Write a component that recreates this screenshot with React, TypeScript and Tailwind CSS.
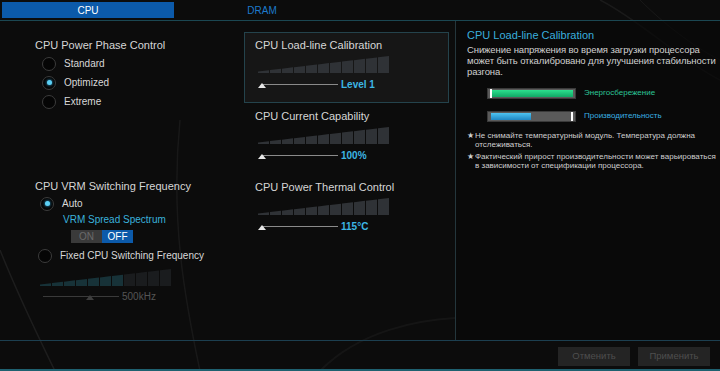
import React from 'react';

const FONT = { fontFamily: '"Liberation Sans", Arial, sans-serif' };

function Radio({ label, checked }: { label: string; checked?: boolean }) {
  return (
    <div className="flex items-center h-[19px] gap-[8px]">
      <span className="w-[14px] h-[14px] rounded-full border border-[#3c3c3c] bg-[#050505] flex items-center justify-center">
        {checked && <span className="w-[5px] h-[5px] rounded-full bg-[#5cd0f5] shadow-[0_0_3px_#3ab8f0]" />}
      </span>
      <span className="text-[10px] text-[#d8d8d8]">{label}</span>
    </div>
  );
}

function Ramp({ active = 11, dim }: { active?: number; dim?: boolean }) {
  const w = 131;
  const h = 17;
  const bw = 11;
  const bars = Array.from({ length: 11 }, (_, i) => {
    const x0 = i * (bw + 1);
    const x1 = x0 + bw;
    const y0 = h - (1.5 + (15.5 * x0) / w);
    const y1 = h - (1.5 + (15.5 * x1) / w);
    let fill = '#2f3236';
    if (dim) fill = i < active ? '#173238' : '#1a1c1e';
    return <polygon key={i} points={`${x0},${h} ${x0},${y0} ${x1},${y1} ${x1},${h}`} fill={fill} />;
  });
  return (
    <svg width={w} height={h} viewBox={`0 0 ${w} ${h}`}>
      {bars}
    </svg>
  );
}

function SliderRow({ value, dim, thumbAt = 0 }: { value: string; dim?: boolean; thumbAt?: number }) {
  return (
    <div className="flex items-center h-[12px]">
      <svg width="80" height="12" viewBox="0 0 80 12">
        <line x1="4" y1="6.5" x2="80" y2="6.5" stroke={dim ? '#3a3a3a' : '#8a8a8a'} strokeWidth="1" />
        <polygon
          points={`${thumbAt},10 ${thumbAt + 4},5 ${thumbAt + 8},10`}
          fill={dim ? '#3d3d3d' : '#e6e6e6'}
        />
      </svg>
      <span className={`ml-[3px] text-[10px] ${dim ? 'text-[#555]' : 'text-[#3db6e4] font-bold'}`}>{value}</span>
    </div>
  );
}

function Setting({ title, value, boxed }: { title: string; value: string; boxed?: boolean }) {
  return (
    <div
      className={`h-[71px] pl-[10px] pt-[5px] ${
        boxed ? 'border border-[#24434c] bg-[#161616]' : 'border border-transparent'
      }`}
    >
      <div className="text-[11px] leading-[14px] text-[#d6d6d6]">{title}</div>
      <div className="mt-[4px] ml-[3px]">
        <Ramp />
      </div>
      <div className="mt-[5px] ml-[3px]">
        <SliderRow value={value} />
      </div>
    </div>
  );
}

function Meter({ fill, color, marker }: { fill: number; color: string; marker: 'left' | 'right' }) {
  return (
    <div className="relative w-[89px] h-[11px] bg-[#5a5a5a] border border-[#3a3a3a]">
      <div className="absolute top-[1px] bottom-[1px] left-[3px]" style={{ width: fill, background: color }} />
      <div
        className={`absolute top-0 bottom-0 w-[2px] bg-white ${marker === 'left' ? 'left-[2px]' : 'right-[2px]'}`}
      />
    </div>
  );
}

export default function App() {
  return (
    <div className="relative w-[720px] h-[371px] overflow-hidden bg-[#0c0c0c]" style={FONT}>
      {/* faint background streaks */}
      <svg className="absolute inset-0 pointer-events-none" width="720" height="371" viewBox="0 0 720 371">
        <path d="M0 250 C 20 300, 40 340, 55 371" stroke="#ffffff" strokeOpacity="0.07" fill="none" strokeWidth="1.5" />
        <path d="M180 120 C 170 220, 185 300, 200 371" stroke="#ffffff" strokeOpacity="0.05" fill="none" strokeWidth="1.5" />
        <path d="M320 371 C 360 330, 420 320, 455 318" stroke="#ffffff" strokeOpacity="0.04" fill="none" strokeWidth="2" />
        <path d="M600 0 C 640 20, 680 60, 720 80" stroke="#ffffff" strokeOpacity="0.06" fill="none" strokeWidth="1.5" />
        <path d="M640 0 C 670 30, 700 50, 720 60" stroke="#ffffff" strokeOpacity="0.05" fill="none" strokeWidth="1" />
      </svg>

      {/* tabs */}
      <div className="relative flex h-[21px] pt-[2px] pl-[2px] border-b border-[#1b4752]">
        <div className="w-[172px] h-[16px] bg-[#0c5aaa] flex items-center justify-center text-[10px] text-white">
          CPU
        </div>
        <div className="w-[176px] h-[16px] flex items-center justify-center text-[10px] text-[#1d7acb]">DRAM</div>
      </div>

      {/* body */}
      <div className="relative flex h-[319px]">
        <div className="w-[240px] pl-[35px] pt-[17px]">
          <div className="text-[11px] leading-[14px] text-[#d6d6d6]">CPU Power Phase Control</div>
          <div className="mt-[2px] ml-[7px]">
            <Radio label="Standard" />
            <Radio label="Optimized" checked />
            <Radio label="Extreme" />
          </div>

          <div className="mt-[68px] text-[11px] leading-[14px] text-[#d6d6d6]">CPU VRM Switching Frequency</div>
          <div className="mt-[1px] ml-[5px]">
            <Radio label="Auto" checked />
          </div>
          <div className="ml-[28px] text-[10px] leading-[13px] text-[#3ab2dc]">VRM Spread Spectrum</div>
          <div className="mt-[4px] ml-[36px] flex h-[13px] text-[10px]">
            <div className="w-[31px] bg-[#3a3a3a] text-[#6a6a6a] flex items-center justify-center">ON</div>
            <div className="w-[31px] bg-[#0c5aaa] text-white flex items-center justify-center">OFF</div>
          </div>
          <div className="mt-[3px] ml-[3px]">
            <Radio label="Fixed CPU Switching Frequency" />
          </div>
          <div className="mt-[4px] ml-[5px]">
            <Ramp dim active={7} />
          </div>
          <div className="mt-[4px] ml-[4px]">
            <SliderRow value="500kHz" dim thumbAt={47} />
          </div>
        </div>

        <div className="w-[215px] pl-[4px] pt-[11px] pr-[6px]">
          <Setting title="CPU Load-line Calibration" value="Level 1" boxed />
          <Setting title="CPU Current Capability" value="100%" />
          <Setting title="CPU Power Thermal Control" value="115°C" />
        </div>

        <div className="flex-1 border-l border-[#24363c] bg-[#080808]/70 pl-[11px] pt-[7px] pr-[4px]">
          <div className="text-[11px] leading-[14px] text-[#3aaedd]">CPU Load-line Calibration</div>
          <div className="mt-[2px] text-[9.5px] leading-[11px] text-[#d0d0d0] whitespace-nowrap tracking-[-0.1px]">
            Снижение напряжения во время загрузки процессора
            <br />
            может быть откалибровано для улучшения стабильности
            <br />
            разгона.
          </div>
          <div className="mt-[10px] ml-[20px] flex items-center gap-[8px]">
            <Meter fill={82} color="linear-gradient(#2de08e,#10a866)" marker="left" />
            <span className="text-[8px] text-[#2cc596]">Энергосбережение</span>
          </div>
          <div className="mt-[11px] ml-[20px] flex items-center gap-[8px]">
            <Meter fill={40} color="linear-gradient(#4ec3f0,#1f86c2)" marker="right" />
            <span className="text-[8px] text-[#3ab0e2]">Производительность</span>
          </div>
          <div className="mt-[9px] text-[8px] leading-[9px] text-[#cfcfcf] whitespace-nowrap">
            <div className="flex">
              <span className="w-[8px] shrink-0">★</span>
              <span>
                Не снимайте температурный модуль. Температура должна
                <br />
                отслеживаться.
              </span>
            </div>
            <div className="flex mt-[3px]">
              <span className="w-[8px] shrink-0">★</span>
              <span>
                Фактический прирост производительности может варьироваться
                <br />в зависимости от спецификации процессора.
              </span>
            </div>
          </div>
        </div>
      </div>

      {/* footer */}
      <div className="relative h-[31px] border-t border-[#1c3f50] flex justify-end items-start pt-[6px] pr-[10px] gap-[8px]">
        <button className="w-[72px] h-[19px] bg-[#242424] text-[9.5px] text-[#4e4e4e]">Отменить</button>
        <button className="w-[72px] h-[19px] bg-[#242424] text-[9.5px] text-[#4e4e4e]">Применить</button>
      </div>
      <div className="absolute left-0 right-0 bottom-0 h-[2px] bg-[#1f6170]" />
    </div>
  );
}
